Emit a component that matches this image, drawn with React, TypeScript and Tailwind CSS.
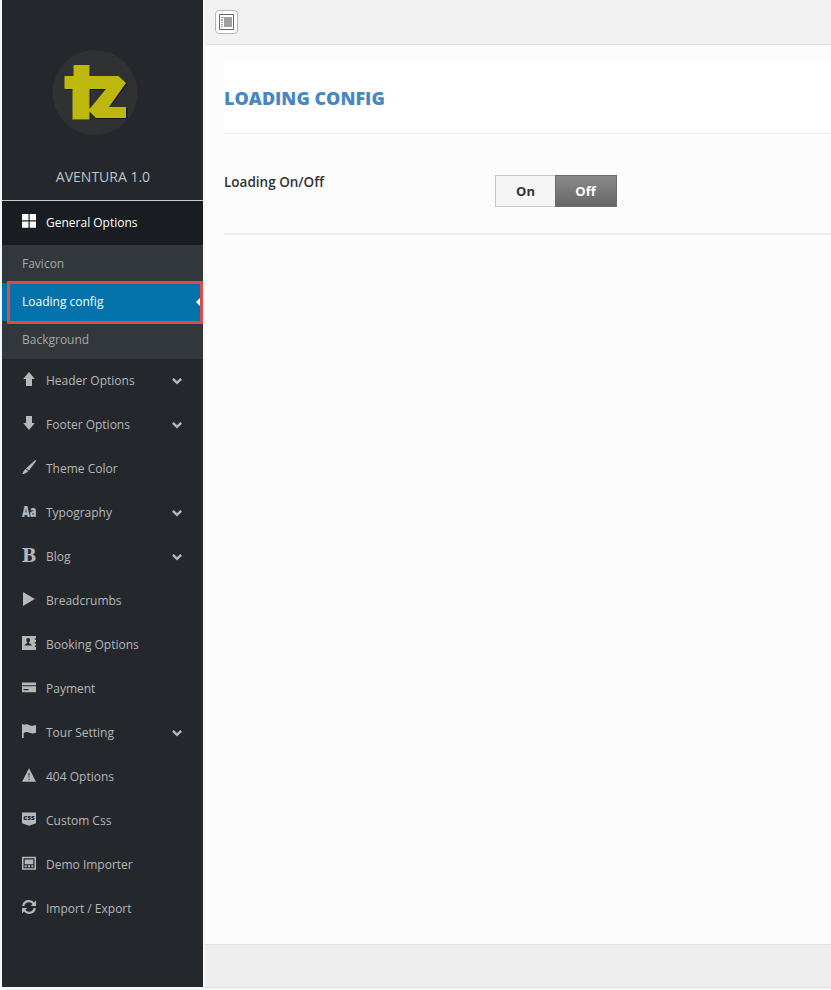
import type { ReactNode } from "react";

const icons: Record<string, ReactNode> = {
  grid: <path d="M0 0h6.500v6.300H0zM7.700 0H14v6.300H7.700zM0 7.400h6.500v6.400H0zM7.700 7.400H14v6.400H7.700z" />,
  up: <path d="M7 0 12.800 7H10v7H4V7H1.200z" />,
  down: <path d="M7 14 12.800 7H10V0H4v7H1.200z" />,
  brush: <path d="M13.200 0 14.300.7 7 10.600 4 8.400zM3.500 8.900l2.800 2C4.800 12.800 2.600 14 0 14c1.300-1.300 1.500-3.800 3.500-5.100z" />,
  play: <path d="M1 0v14L12.800 7z" />,
  contacts: (
    <path
      fillRule="evenodd"
      d="M0 0h14v2.300h-1.200v1.500H14V6h-1.200v1.400H14v2.200h-1.200v1.500H14V14H0zM5.900 2C4.900 2 4.200 2.800 4.300 4c.1 1.200.4 1.800.9 2.300v.9C4 7.700 2.800 8 2.500 9.600h7.300C9.500 8 8.200 7.700 7 7.200v-.9c.6-.5.9-1.100 1-2.300C8.100 2.800 7.200 2 5.900 2z"
    />
  ),
  card: <path fillRule="evenodd" d="M0 2.500h14v2.700H0zM0 6.200h14V12.200H0zM1.500 9v1.300h5V9z" />,
  flag: <path d="M0 0h1.500v1C4-.2 5.500.2 7.500 1.200c2 .9 4 .8 6.500-.2v7.700c-2.600 1.200-4.500.9-6.600 0-2.200-.9-3.600-.7-5.700.2V14H0z" />,
  warning: <path fillRule="evenodd" d="M7 .3 14 13.700H0zM6.500 5l.2 4.700h.6L7.500 5zM6.500 10.700v1.300h1v-1.300z" />,
  screen: <path fillRule="evenodd" d="M0 .7h14v13H0zM1.500 2.200v10h11v-10zM2.700 3.400h8.600v4.800H2.700zM2.700 9.200h2v2h-2zM6 9.200h2v2H6zM9.300 9.200h2v2h-2z" />,
  refresh: (
    <>
      <path d="M1.200 6C1.700 3.200 4 1.200 7 1.200c2 0 3.600.9 4.700 2.400M12.800 8c-.5 2.800-2.800 4.800-5.800 4.800-2 0-3.600-.9-4.700-2.400" fill="none" stroke="currentColor" strokeWidth="2.200" />
      <path d="M14 .5v5.500H8.700zM0 13.500V8h5.300z" />
    </>
  ),
  css: (
    <>
      <path d="M0 .5h14v10.700L7 13.700 0 11.200z" />
      <text x="7" y="8" textAnchor="middle" fontSize="6.500" fontWeight="800" fill="#24282d" textLength="11.500" lengthAdjust="spacingAndGlyphs">css</text>
    </>
  ),
  type: <text x="0" y="12.500" fontSize="15" fontWeight="800" textLength="14.500" lengthAdjust="spacingAndGlyphs">Aa</text>,
  bold: <text x="-.3" y="14" fontSize="19" fontWeight="700" className="font-['Noto_Serif','DejaVu_Serif',serif]" textLength="14.500" lengthAdjust="spacingAndGlyphs">B</text>,
};

const items = [
  { label: "Header Options", icon: "up", menu: true },
  { label: "Footer Options", icon: "down", menu: true },
  { label: "Theme Color", icon: "brush" },
  { label: "Typography", icon: "type", menu: true },
  { label: "Blog", icon: "bold", menu: true },
  { label: "Breadcrumbs", icon: "play" },
  { label: "Booking Options", icon: "contacts" },
  { label: "Payment", icon: "card" },
  { label: "Tour Setting", icon: "flag", menu: true },
  { label: "404 Options", icon: "warning" },
  { label: "Custom Css", icon: "css" },
  { label: "Demo Importer", icon: "screen" },
  { label: "Import / Export", icon: "refresh" },
];

function Icon({ name }: { name: string }) {
  return (
    <svg viewBox="0 0 14 14" className="mb-1 h-3.5 w-3.5 shrink-0 overflow-visible" fill="currentColor">
      {icons[name]}
    </svg>
  );
}

function Logo() {
  return (
    <svg viewBox="0 0 86 86" className="h-[86px] w-[86px]">
      <circle cx="43" cy="42.500" r="42.500" fill="#2f3132" />
      <path d="M22 15h16v11h29l8 7-18 24h18v11H44l-6-6v7H21V39h-8V26h9zM38 39v20l17-20z" fillRule="evenodd" fill="#17191b" transform="translate(.5 1)" />
      <path d="M21.500 15h16v11h29l7.500 7L57 57h17v11H44l-6.500-6.500V69.500H20.500V39H12.500V26h9zM37.500 39v20L54 39z" fill="#bcb80d" fillRule="evenodd" />
    </svg>
  );
}

function Sidebar() {
  return (
    <aside className="ml-0.5 h-[987px] w-[201px] shrink-0 bg-[#24282d] text-xs text-[#b5b7b9]">
      <div className="flex h-[201px] flex-col items-center border-b border-[#c9cbcd] pt-[50px]">
        <div className="mr-[15px]"><Logo /></div>
        <div className="ml-px mt-[31px] text-sm leading-5 text-[#c0c2c4]">AVENTURA 1.0</div>
      </div>
      <div className="flex h-11 items-center gap-2.5 bg-[#191d21] pl-5 text-white">
        <Icon name="grid" />
        <span>General Options</span>
      </div>
      <div className="bg-[#32373b] text-[#a5a8aa]">
        <div className="flex h-[38px] items-center pl-5">Favicon</div>
        <div className="relative flex h-[38px] items-center bg-[#0472aa] pl-5 text-white">
          Loading config
          <span className="absolute right-[3px] top-[15px] border-y-4 border-r-4 border-y-transparent border-r-white" />
          <span className="absolute -top-0.5 left-[5px] h-[43px] w-[196px] border-[3px] border-[#d84d47]" />
        </div>
        <div className="flex h-[38px] items-center pl-5">Background</div>
      </div>
      {items.map((item) => (
        <div key={item.label} className="flex h-11 items-center gap-2.5 pl-5 pr-[21px]">
          <Icon name={item.icon} />
          <span>{item.label}</span>
          {item.menu && (
            <svg viewBox="0 0 10 7" className="ml-auto h-[7px] w-2.5" fill="none" stroke="currentColor" strokeWidth="2.500">
              <path d="m.8.8 4.200 4L9.200.8" />
            </svg>
          )}
        </div>
      ))}
    </aside>
  );
}

export default function App() {
  return (
    <div className="flex h-[990px] w-[831px] overflow-hidden bg-[#f7f7f7] font-['Open_Sans',sans-serif]">
      <Sidebar />
      <main className="ml-0.5 flex h-[988px] min-w-0 flex-1 flex-col border-b border-[#dedede] bg-[#fcfcfc]">
        <header className="h-[45px] shrink-0 border-b border-[#e3e3e3] bg-[#f2f2f2] pl-2.5 pt-2.5">
          <div className="flex h-6 w-[23px] items-center justify-center rounded-sm border border-[#b5b5b5] bg-white">
            <svg viewBox="0 0 15 16" className="h-4 w-[15px]">
              <path d="M.5.5h14v15H.5z" fill="none" stroke="#666" />
              <path d="M2 3h11v1H2zM2 5h2v2H2zM2 8h2v1H2zM2 10h2v1H2zM2 12h2v1H2zM5 4h8v9H5z" fill="#a0a0a0" />
            </svg>
          </div>
        </header>
        <section className="flex-1 pl-[19px]">
          <div className="mt-4 flex h-[73px] items-center border-b border-[#e9e9e9] bg-white pt-0.5">
            <h1 className="whitespace-nowrap text-lg font-extrabold text-[#4788c1]">LOADING CONFIG</h1>
          </div>
          <div className="flex h-[101px] items-start border-b-2 border-[#eee]">
            <div className="mt-[38px] w-[271px] text-[13.500px] font-semibold leading-5 text-[#333]">Loading On/Off</div>
            <div className="mt-[41px] flex h-8 w-[122px] border border-[#c5c5c5] text-[13px] font-bold">
              <div className="flex flex-1 items-center justify-center bg-[#f5f5f5] pt-0.5 text-[#333]">On</div>
              <div className="-my-px -mr-px flex w-[62px] items-center justify-center border border-[#6d6d6d] bg-linear-to-b from-[#8b8b8b] to-[#666] pr-px pt-0.5 text-white">Off</div>
            </div>
          </div>
        </section>
        <footer className="h-[43px] shrink-0 border-t border-[#e2e2e2] bg-[#eee]" />
      </main>
    </div>
  );
}
